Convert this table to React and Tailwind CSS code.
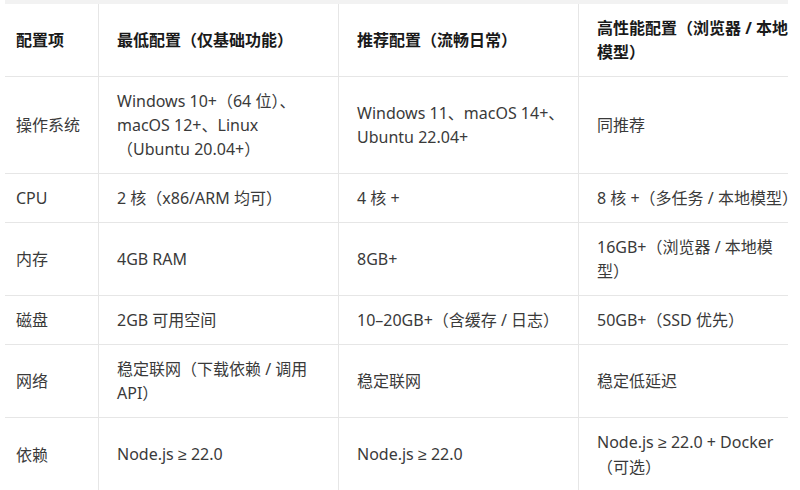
import React from "react";

const GE = () => (
  <span style={{ fontFamily: '"Liberation Sans", "DejaVu Sans", sans-serif' }}>≥</span>
);

const header = [
  ["配置项"],
  ["最低配置（仅基础功能）"],
  ["推荐配置（流畅日常）"],
  ["高性能配置（浏览器 / 本地", "模型）"],
];

const node = (
  <>
    Node.js <GE /> 22.0
  </>
);

const rows = [
  [
    ["操作系统"],
    ["Windows 10+（64 位）、", "macOS 12+、Linux", "（Ubuntu 20.04+）"],
    ["Windows 11、macOS 14+、", "Ubuntu 22.04+"],
    ["同推荐"],
  ],
  [["CPU"], ["2 核（x86/ARM 均可）"], ["4 核 +"], ["8 核 +（多任务 / 本地模型）"]],
  [["内存"], ["4GB RAM"], ["8GB+"], ["16GB+（浏览器 / 本地模", "型）"]],
  [["磁盘"], ["2GB 可用空间"], ["10–20GB+（含缓存 / 日志）"], ["50GB+（SSD 优先）"]],
  [["网络"], ["稳定联网（下载依赖 / 调用", "API）"], ["稳定联网"], ["稳定低延迟"]],
  [
    ["依赖"],
    [node],
    [node],
    [
      <>
        Node.js <GE /> 22.0 + Docker
      </>,
      "（可选）",
    ],
  ],
];

function Cell({ lines, col, head }) {
  const colCls =
    col === 0
      ? "pl-[11px] pr-2"
      : "border-l border-[#e6e6e6] pl-[18px] pr-2";
  return (
    <div
      className={`${colCls} flex items-center border-b border-[#e6e6e6] py-3 ${
        head ? "font-bold text-[#1a1a1a]" : "text-[#3a3a3a]"
      }`}
    >
      <div className="whitespace-nowrap leading-[24px]">
        {lines.map((l, i) => (
          <div key={i}>{l}</div>
        ))}
      </div>
    </div>
  );
}

export default function App() {
  return (
    <div
      className="h-[490px] w-[800px] overflow-hidden bg-white text-[16px]"
      style={{ fontFamily: '"Noto Sans", "Noto Sans CJK SC", sans-serif' }}
    >
      <div className="ml-[5px] w-[783px]">
        <div className="h-[4px] bg-[#f2f2f2]" />
        <div className="grid grid-cols-[93px_240px_240px_210px]">
          {header.map((h, i) => (
            <Cell key={i} lines={h} col={i} head />
          ))}
          {rows.map((r, ri) =>
            r.map((c, ci) => <Cell key={ri + "-" + ci} lines={c} col={ci} />)
          )}
        </div>
      </div>
    </div>
  );
}
